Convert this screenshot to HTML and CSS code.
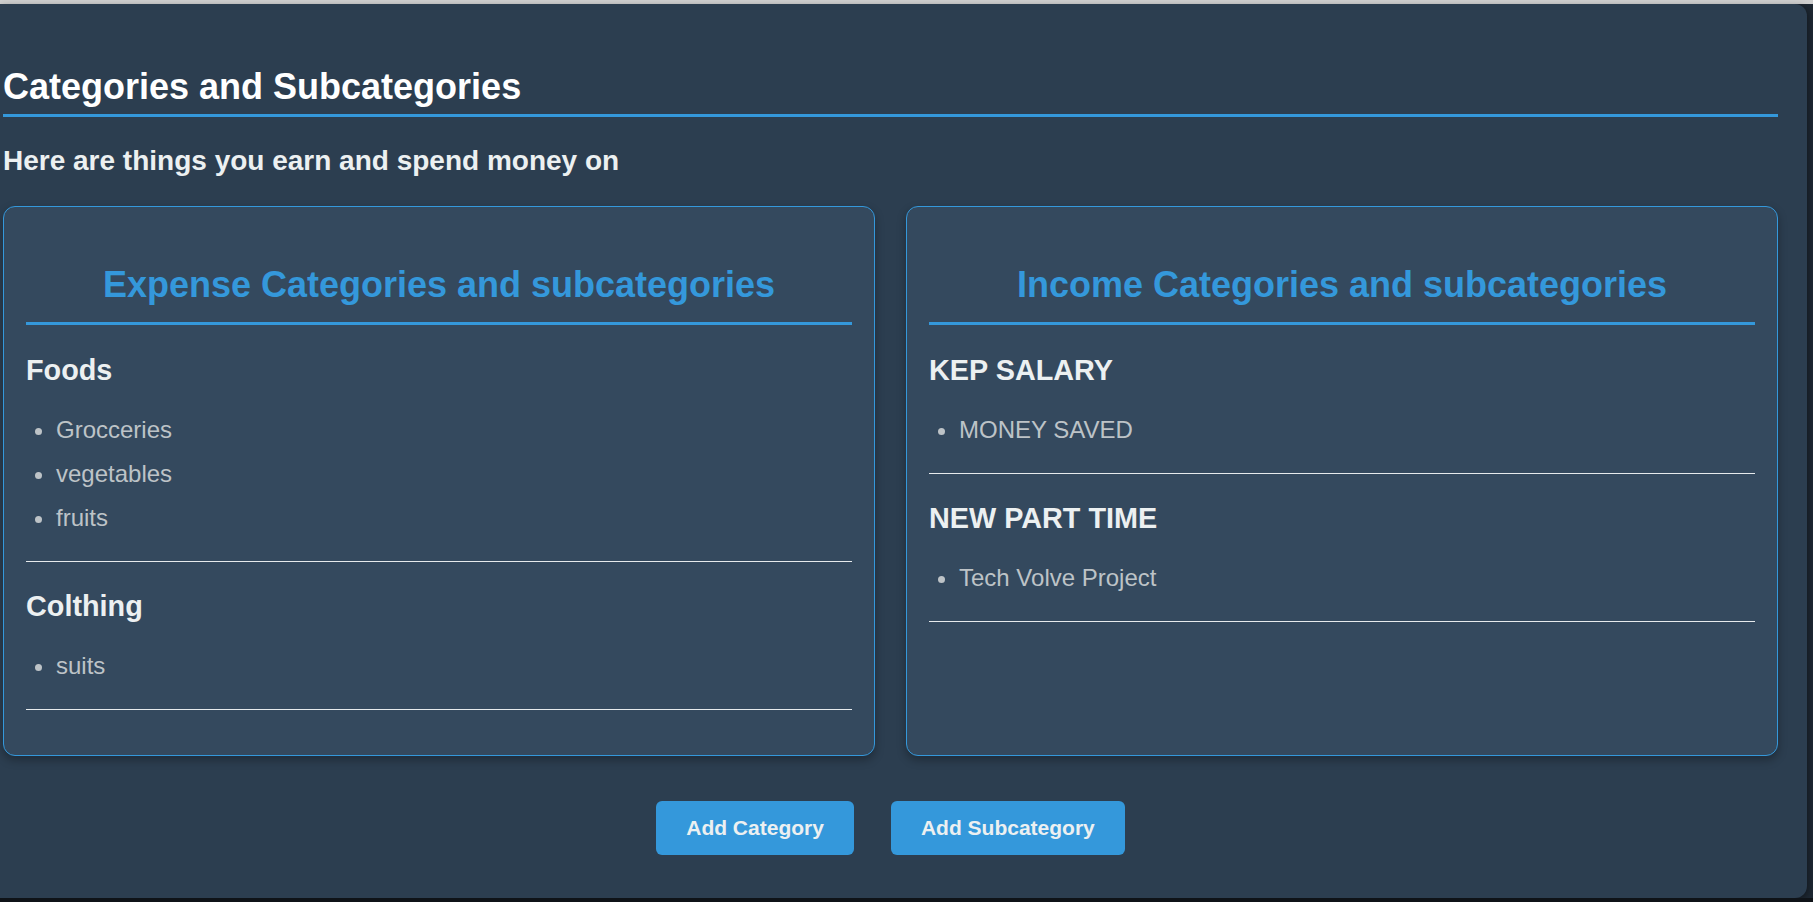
FILE: index.html
```html
<!DOCTYPE html>
<html lang="en">
<head>
<meta charset="utf-8">
<title>Categories and Subcategories</title>
<link rel="stylesheet" href="styles.css">
</head>
<body>
<div class="topbar"></div>
<main class="app">
  <h1 class="page-title">Categories and Subcategories</h1>
  <p class="subtitle">Here are things you earn and spend money on</p>
  <div class="cards">
    <section class="card">
      <h2 class="card-title">Expense Categories and subcategories</h2>
      <div class="cat">
        <h3 class="cat-name">Foods</h3>
        <ul class="subs">
          <li>Grocceries</li>
          <li>vegetables</li>
          <li>fruits</li>
        </ul>
      </div>
      <div class="cat">
        <h3 class="cat-name">Colthing</h3>
        <ul class="subs">
          <li>suits</li>
        </ul>
      </div>
    </section>
    <section class="card">
      <h2 class="card-title">Income Categories and subcategories</h2>
      <div class="cat">
        <h3 class="cat-name">KEP SALARY</h3>
        <ul class="subs">
          <li>MONEY SAVED</li>
        </ul>
      </div>
      <div class="cat">
        <h3 class="cat-name">NEW PART TIME</h3>
        <ul class="subs">
          <li>Tech Volve Project</li>
        </ul>
      </div>
    </section>
  </div>
  <div class="actions">
    <button class="btn" type="button">Add Category</button>
    <button class="btn" type="button">Add Subcategory</button>
  </div>
</main>
<div class="bottombar"></div>
</body>
</html>
```

FILE: styles.css
```css
* {
  box-sizing: border-box;
}

html,
body {
  margin: 0;
  padding: 0;
  height: 902px;
  overflow: hidden;
}

body {
  background: #1e2833;
  font-family: "Liberation Sans", Arial, sans-serif;
  color: #ecf0f1;
}

.topbar {
  height: 4px;
  background: #cfcfcf;
}

.app {
  height: 894px;
  margin-right: 6px;
  padding: 62px 29px 0 3px;
  background: #2c3e50;
  border-radius: 0 12px 12px 0;
  box-shadow: 2px 2px 6px rgba(0, 0, 0, 0.35);
}

.bottombar {
  height: 4px;
  background: #0f1318;
}

.page-title {
  margin: 0;
  padding-bottom: 6px;
  font-size: 36px;
  font-weight: bold;
  color: #ffffff;
  border-bottom: 3px solid #3498db;
}

.subtitle {
  margin: 28px 0 29px;
  font-size: 28px;
  font-weight: bold;
  color: #ecf0f1;
}

.cards {
  display: flex;
  gap: 31px;
  align-items: stretch;
}

.card {
  flex: 1 1 0;
  background: #34495e;
  border: 1px solid #3498db;
  border-radius: 12px;
  padding: 22px 22px 45px;
  box-shadow: 0 4px 10px rgba(0, 0, 0, 0.3);
}

.card-title {
  margin: 35px 0 0;
  padding-bottom: 16px;
  font-size: 36px;
  font-weight: bold;
  color: #3498db;
  text-align: center;
  border-bottom: 3px solid #3498db;
}

.cat {
  padding: 28.5px 0 21px;
  border-bottom: 1px solid #e6eaec;
}

.cat-name {
  margin: 0 0 21px;
  font-size: 28.8px;
  font-weight: bold;
  color: #ecf0f1;
}

.subs {
  margin: 0;
  padding-left: 30px;
  font-size: 24px;
  color: #bdc3c7;
}

.subs li {
  padding: 8px 0;
}

.actions {
  display: flex;
  justify-content: center;
  gap: 37px;
  margin-top: 45px;
}

.btn {
  font-family: "Liberation Sans", Arial, sans-serif;
  font-size: 21px;
  font-weight: bold;
  color: #ecf0f1;
  background: #3498db;
  border: none;
  border-radius: 6px;
  padding: 15px 30px;
  height: 54px;
  line-height: 24px;
  cursor: pointer;
}
```
